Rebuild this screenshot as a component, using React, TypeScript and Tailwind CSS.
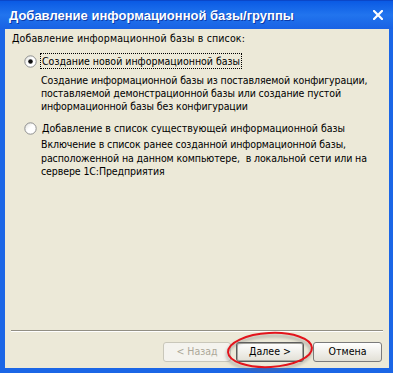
import React from "react";

function Radio({ checked }: { checked?: boolean }) {
  return (
    <svg width="13" height="13" viewBox="0 0 13 13" className="shrink-0">
      <defs>
        <linearGradient id={checked ? "rg1" : "rg2"} x1="0" y1="0" x2="1" y2="1">
          <stop offset="0" stopColor="#dcdcd6" />
          <stop offset="0.45" stopColor="#ffffff" />
          <stop offset="1" stopColor="#ffffff" />
        </linearGradient>
      </defs>
      <circle cx="6.5" cy="6.5" r="5.7" fill={`url(#${checked ? "rg1" : "rg2"})`} stroke="#8e8f8f" strokeWidth="1" />
      {checked && <circle cx="6.5" cy="6.5" r="2.3" fill="#111111" />}
    </svg>
  );
}

export default function App() {
  return (
    <div className="relative w-[393px] h-[373px] overflow-hidden bg-[#1b66e6] flex flex-col font-['DejaVu_Sans_Condensed','Liberation_Sans',sans-serif] text-[10.5px] text-black whitespace-nowrap">
      {/* title bar */}
      <div className="h-[29px] shrink-0 flex items-center justify-between pl-[9px] pr-[10px] bg-linear-to-b from-[#0a5ae4] via-[#2174ee] to-[#1962e4] border-t border-[#0b47c8]">
        <span className="text-[13px] font-bold text-white leading-none font-['Liberation_Sans',sans-serif] [text-shadow:1px_1px_#0c3aa8]">
          Добавление информационной базы/группы
        </span>
        <svg width="10" height="10" viewBox="0 0 10 10">
          <path d="M1 1 L9 9 M9 1 L1 9" stroke="#ffffff" strokeWidth="2.2" strokeLinecap="square" />
        </svg>
      </div>

      {/* client */}
      <div className="flex-1 ml-[5px] mr-[4px] mb-[5px] bg-[#ece9d8] flex flex-col">
        <div className="pl-[7px] pt-[3px]">
          <div className="leading-[13px] tracking-[0.15px]">Добавление информационной базы в список:</div>

          <div className="mt-[8px] ml-[12px] flex items-center h-[16px]">
            <Radio checked />
            <div className="ml-[3px] h-[16px] border border-dotted border-black px-[1px] flex items-center leading-[13px]">
              Создание новой информационной базы
            </div>
          </div>

          <div className="mt-[5px] ml-[29px] leading-[13px] tracking-[-0.1px]">
            <div>Создание информационной базы из поставляемой конфигурации,</div>
            <div>поставляемой демонстрационной базы или создание пустой</div>
            <div>информационной базы без конфигурации</div>
          </div>

          <div className="mt-[7px] ml-[12px] flex items-center h-[16px]">
            <Radio />
            <div className="ml-[3px] h-[16px] border border-transparent px-[1px] flex items-center leading-[13px]">
              Добавление в список существующей информационной базы
            </div>
          </div>

          <div className="mt-[2px] ml-[29px] leading-[13.5px] tracking-[-0.1px]">
            <div>Включение в список ранее созданной информационной базы,</div>
            <div>расположенной на данном компьютере,&nbsp; в локальной сети или на</div>
            <div>сервере 1С:Предприятия</div>
          </div>
        </div>

        <div className="mt-auto">
          <div className="mx-[6px] h-[2px] border-t border-[#928f84] border-b border-b-white" />
          <div className="flex justify-end pr-[7px] pt-[10px] pb-[6px]">
            <div className="w-[68px] h-[20px] rounded-[3px] border border-[#c9c7ba] bg-[#f4f3ee] text-[#aca899] flex items-center justify-center">
              &lt; Назад
            </div>
            <div className="ml-[5px] w-[68px] h-[20px] rounded-[3px] border border-[#5c5c5c] shadow-[inset_0_0_0_1px_#a6a59e] bg-linear-to-b from-white to-[#e2e0d6] flex items-center justify-center">
              Далее &gt;
            </div>
            <div className="ml-[9px] w-[69px] h-[20px] rounded-[3px] border border-[#7b7b7b] bg-linear-to-b from-white to-[#e2e0d6] flex items-center justify-center">
              Отмена
            </div>
          </div>
        </div>
      </div>

      {/* red annotation ellipse */}
      <svg className="absolute left-0 top-0 pointer-events-none" width="393" height="373" viewBox="0 0 393 373">
        <defs>
          <filter id="sh" x="-20%" y="-40%" width="140%" height="180%">
            <feGaussianBlur stdDeviation="1.6" />
          </filter>
        </defs>
        <ellipse cx="269" cy="353" rx="42" ry="17" fill="none" stroke="#6b6b6b" strokeOpacity="0.45" strokeWidth="2.5" filter="url(#sh)" transform="rotate(-3 269 353)" />
        <ellipse cx="270" cy="350" rx="42" ry="17" fill="none" stroke="#e3141c" strokeWidth="2" transform="rotate(-3 270 350)" />
      </svg>
    </div>
  );
}
